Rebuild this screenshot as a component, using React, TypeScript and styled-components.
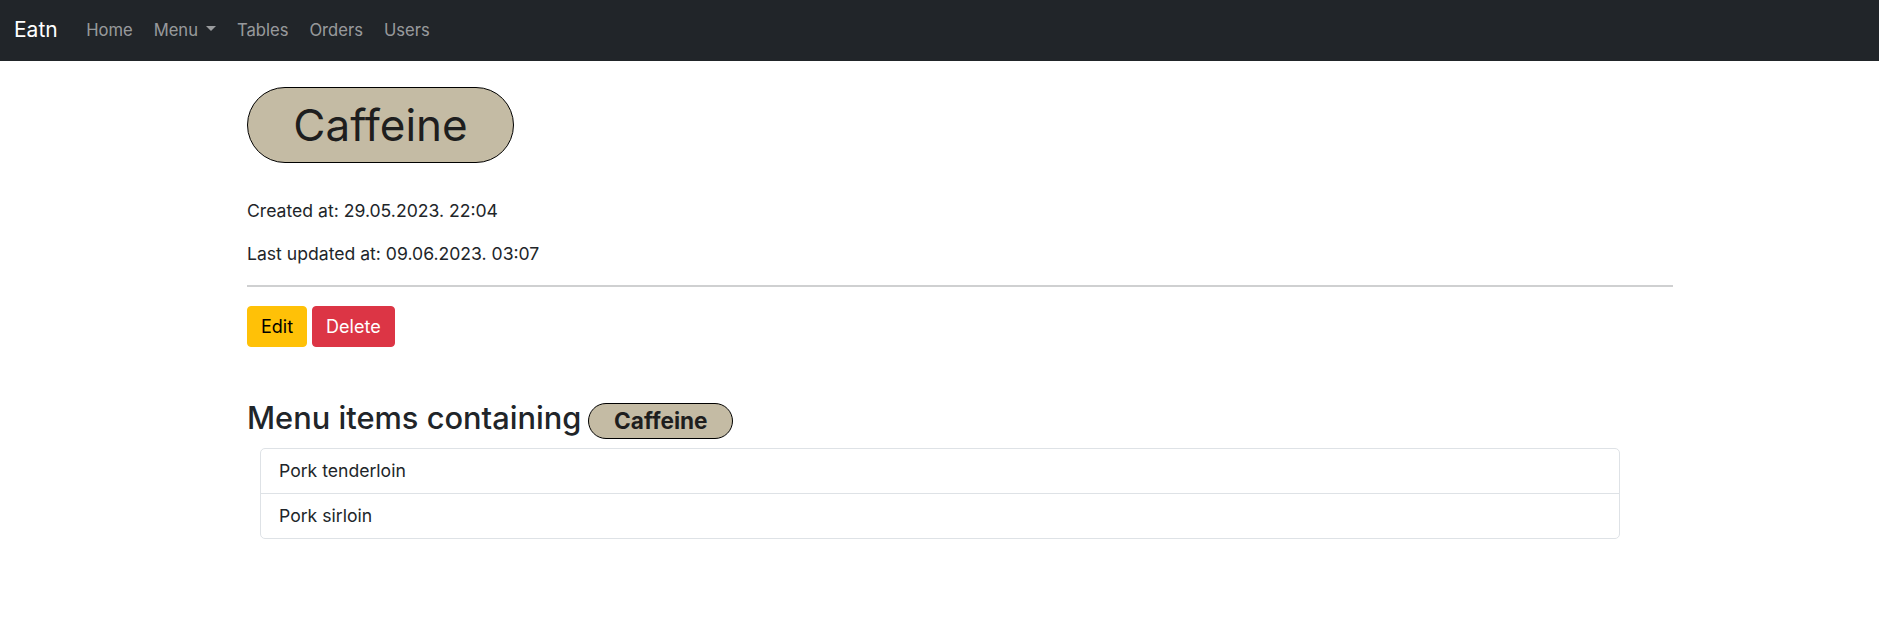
import React from "react";
import styled, { createGlobalStyle } from "styled-components";

const Global = createGlobalStyle`
  html, body { margin: 0; padding: 0; background: #fff; }
  body {
    font-family: Inter, "Noto Sans", sans-serif;
    font-size: 17.6px;
    line-height: 1.5;
    color: #212529;
  }
  * { box-sizing: border-box; }
`;

const Navbar = styled.nav`
  height: 61px;
  background: #212529;
  display: flex;
  align-items: center;
  padding: 0 14px 2px;
`;

const Brand = styled.a`
  color: #fff;
  font-size: 21px;
  line-height: 30px;
  margin-right: 18px;
  text-decoration: none;
`;

const NavList = styled.ul`
  display: flex;
  list-style: none;
  margin: 0;
  padding: 0;
`;

const NavLink = styled.a`
  display: flex;
  align-items: center;
  color: rgba(255, 255, 255, 0.55);
  font-size: 16.6px;
  line-height: 24px;
  padding: 8px 10.5px;
  text-decoration: none;
`;

const Caret = styled.span`
  display: inline-block;
  margin-left: 8px;
  width: 0;
  height: 0;
  border-top: 5.5px solid rgba(255, 255, 255, 0.55);
  border-left: 5.5px solid transparent;
  border-right: 5.5px solid transparent;
  margin-bottom: 2px;
`;

const Main = styled.main`
  width: 1426px;
  margin-left: 247px;
  padding-top: 26px;
`;

const Tag = styled.span<{ $size: "lg" | "sm" }>`
  display: inline-flex;
  align-items: center;
  justify-content: center;
  background: #c4bba4;
  border: 1px solid #000;
  border-radius: 999px;
  color: #1e1e1e;
  ${(p) =>
    p.$size === "lg"
      ? `width: 267px; height: 76px; font-size: 44px; font-weight: 400;`
      : `width: 145px; height: 36px; margin-top: 3px; font-size: 22.6px; font-weight: 700;`}
`;

const Meta = styled.p`
  margin: 0 0 17px;
`;

const MetaBlock = styled.div`
  margin-top: 35px;
`;

const Divider = styled.hr`
  margin: 1px 0 19px;
  border: 0;
  border-top: 2px solid #cfd0d1;
`;

const ButtonRow = styled.div`
  display: flex;
  gap: 5px;
`;

const Button = styled.button<{ $variant: "warning" | "danger" }>`
  font-family: inherit;
  font-size: 18px;
  line-height: 27px;
  padding: 6px 13px;
  border-radius: 4px;
  border: 1px solid ${(p) => (p.$variant === "warning" ? "#ffc107" : "#dc3545")};
  background: ${(p) => (p.$variant === "warning" ? "#ffc107" : "#dc3545")};
  color: ${(p) => (p.$variant === "warning" ? "#000" : "#fff")};
`;

const SectionTitle = styled.h3`
  margin: 53px 0 9px;
  font-size: 30.8px;
  font-weight: 500;
  line-height: 36px;
  display: flex;
  align-items: flex-start;
  gap: 7px;
`;

const ListGroup = styled.ul`
  list-style: none;
  margin: 0 53px 0 13px;
  padding: 0;
  border: 1px solid #dee2e6;
  border-radius: 5px;
`;

const ListItem = styled.li`
  padding: 9px 18px;
  line-height: 26px;
  & + & { border-top: 1px solid #dee2e6; }
`;

export default function App() {
  return (
    <>
      <Global />
      <Navbar>
        <Brand href="#">Eatn</Brand>
        <NavList>
          <li><NavLink href="#">Home</NavLink></li>
          <li><NavLink href="#">Menu<Caret /></NavLink></li>
          <li><NavLink href="#">Tables</NavLink></li>
          <li><NavLink href="#">Orders</NavLink></li>
          <li><NavLink href="#">Users</NavLink></li>
        </NavList>
      </Navbar>
      <Main>
        <Tag $size="lg">Caffeine</Tag>
        <MetaBlock>
          <Meta>Created at: 29.05.2023. 22:04</Meta>
          <Meta>Last updated at: 09.06.2023. 03:07</Meta>
        </MetaBlock>
        <Divider />
        <ButtonRow>
          <Button $variant="warning">Edit</Button>
          <Button $variant="danger">Delete</Button>
        </ButtonRow>
        <SectionTitle>
          Menu items containing <Tag $size="sm">Caffeine</Tag>
        </SectionTitle>
        <ListGroup>
          <ListItem>Pork tenderloin</ListItem>
          <ListItem>Pork sirloin</ListItem>
        </ListGroup>
      </Main>
    </>
  );
}
